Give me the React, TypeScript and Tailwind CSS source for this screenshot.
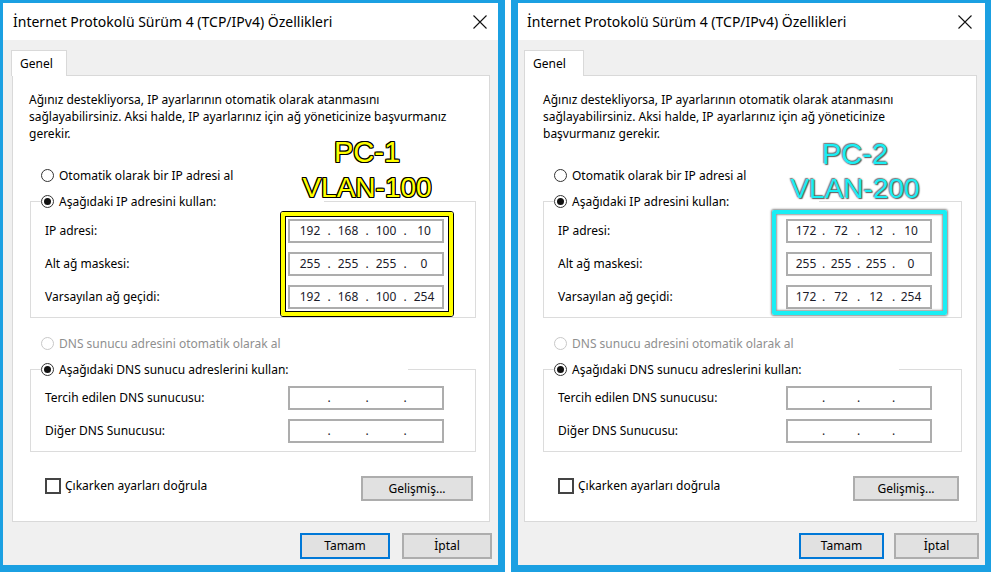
import React from 'react';

type Cfg = {
  outer: string;
  titlePl: string;
  closeMr: string;
  tabW: string;
  panelMx: string;
  para: string[];
  paraPl: string;
  radioPl: string;
  fsMx: string;
  legendIp: string;
  legendDns: string;
  rowPr: string;
  inputW: string;
  segPl: string;
  segW: string;
  dotW: string;
  checkPl: string;
  advBtn: string;
  footBtn: string;
  footGap: string;
  ips: string[][];
  label: [string, string];
  labelPos: string;
  labelColor: string;
  labelGap: string;
  box: string;
  boxInner: string;
};

const font = 'font-["Noto_Sans","Open_Sans",sans-serif]';

function Radio({ checked, disabled }: { checked?: boolean; disabled?: boolean }) {
  return (
    <span
      className={
        'flex h-[13px] w-[13px] shrink-0 items-center justify-center rounded-full border bg-white ' +
        (disabled ? 'border-[#c8c8c8]' : 'border-[#333333]')
      }
    >
      {checked && <span className="h-[7px] w-[7px] rounded-full bg-[#111111]" />}
    </span>
  );
}

function IpBox({ cfg, value }: { cfg: Cfg; value?: string[] }) {
  const parts = value ?? ['', '', '', ''];
  return (
    <div className={`flex h-[24px] items-center border-2 border-[#adadad] bg-white text-[12px] text-[#1b1b2a] ${cfg.inputW} ${cfg.segPl}`}>
      {parts.map((p, i) => (
        <React.Fragment key={i}>
          <span className={`${cfg.segW} text-center`}>{p}</span>
          {i < 3 && <span className={`${cfg.dotW} text-center`}>.</span>}
        </React.Fragment>
      ))}
    </div>
  );
}

function Row({ cfg, label, value }: { cfg: Cfg; label: string; value?: string[] }) {
  return (
    <div className={`flex items-center justify-between pl-[14px] ${cfg.rowPr}`}>
      <span>{label}</span>
      <IpBox cfg={cfg} value={value} />
    </div>
  );
}

function Btn({ children, cls }: { children: React.ReactNode; cls: string }) {
  return (
    <div className={`flex items-center justify-center bg-[#e1e1e1] text-[12px] text-black ${cls}`}>
      {children}
    </div>
  );
}

function Dialog({ cfg }: { cfg: Cfg }) {
  return (
    <div className={`relative flex h-[572px] shrink-0 flex-col border-[#1ba0e2] bg-[#f0f0f0] ${cfg.outer} ${font}`}>
      {/* title bar */}
      <div className={`flex h-[37px] items-center justify-between bg-white ${cfg.titlePl}`}>
        <span className="text-[14px] text-black">İnternet Protokolü Sürüm 4 (TCP/IPv4) Özellikleri</span>
        <svg width="14" height="14" viewBox="0 0 14 14" className={cfg.closeMr}>
          <path d="M0.5 0.5 L13.5 13.5 M13.5 0.5 L0.5 13.5" stroke="#111" strokeWidth="1.1" />
        </svg>
      </div>

      <div className={`flex flex-1 flex-col pt-[10px] ${cfg.panelMx}`}>
        {/* tab */}
        <div className={`relative z-10 -mb-px flex h-[26px] items-center border border-b-0 border-[#d9d9d9] bg-white pl-[8px] text-[12px] ${cfg.tabW}`}>
          Genel
        </div>

        {/* tab page */}
        <div className="flex h-[447px] flex-col border border-[#d9d9d9] bg-white text-[12px] text-black">
          <p className={`pt-[15px] leading-[17px] whitespace-nowrap ${cfg.paraPl}`}>
            {cfg.para.map((l, i) => (
              <span key={i} className="block">
                {l}
              </span>
            ))}
          </p>

          <div className={`mt-[25px] flex h-[17px] items-center gap-[5px] ${cfg.radioPl}`}>
            <Radio />
            <span>Otomatik olarak bir IP adresi al</span>
          </div>

          <fieldset className={`mt-[9px] border border-[#dcdcdc] pb-[8px] ${cfg.fsMx}`}>
            <legend className={`ml-[10px] flex h-[17px] items-center gap-[5px] ${cfg.legendIp}`}>
              <Radio checked />
              <span>Aşağıdaki IP adresini kullan:</span>
            </legend>
            <div className="flex flex-col gap-[9px] pt-[9px]">
              <Row cfg={cfg} label="IP adresi:" value={cfg.ips[0]} />
              <Row cfg={cfg} label="Alt ağ maskesi:" value={cfg.ips[1]} />
              <Row cfg={cfg} label="Varsayılan ağ geçidi:" value={cfg.ips[2]} />
            </div>
          </fieldset>

          <div className={`mt-[17px] flex h-[17px] items-center gap-[5px] text-[#8f8f8f] ${cfg.radioPl}`}>
            <Radio disabled />
            <span>DNS sunucu adresini otomatik olarak al</span>
          </div>

          <fieldset className={`mt-[9px] border border-[#dcdcdc] pb-[8px] ${cfg.fsMx}`}>
            <legend className={`ml-[10px] flex h-[17px] items-center gap-[5px] ${cfg.legendDns}`}>
              <Radio checked />
              <span>Aşağıdaki DNS sunucu adreslerini kullan:</span>
            </legend>
            <div className="flex flex-col gap-[9px] pt-[8px]">
              <Row cfg={cfg} label="Tercih edilen DNS sunucusu:" />
              <Row cfg={cfg} label="Diğer DNS Sunucusu:" />
            </div>
          </fieldset>

          <div className="mt-[24px] flex items-start justify-between">
            <div className={`mt-[2px] flex h-[16px] items-center gap-[4px] ${cfg.checkPl}`}>
              <span className="h-[16px] w-[16px] border-2 border-[#444] bg-white" />
              <span>Çıkarken ayarları doğrula</span>
            </div>
            <Btn cls={`h-[25px] border-2 border-[#adadad] ${cfg.advBtn}`}>Gelişmiş...</Btn>
          </div>
        </div>

        {/* footer */}
        <div className={`flex flex-1 items-start justify-end pt-[11px] ${cfg.footGap}`}>
          <Btn cls={`h-[26px] border-2 border-[#0078d7] ${cfg.footBtn}`}>Tamam</Btn>
          <Btn cls={`h-[26px] border-2 border-[#adadad] ${cfg.footBtn}`}>İptal</Btn>
        </div>
      </div>

      {/* annotation */}
      <div className={`pointer-events-none absolute ${cfg.box}`}>
        <div className={`h-full w-full ${cfg.boxInner}`} />
      </div>
      <div
        className={`pointer-events-none absolute flex w-[200px] flex-col items-center font-['Liberation_Sans',Arial,sans-serif] ${cfg.labelPos} ${cfg.labelColor}`}
      >
        <span className="text-[29px] leading-[29px]">{cfg.label[0]}</span>
        <span className={`text-[28px] leading-[28px] ${cfg.labelGap}`}>{cfg.label[1]}</span>
      </div>
    </div>
  );
}

const left: Cfg = {
  outer: 'w-[505px] border-t-[3px] border-l-[3px] border-r-[7px] border-b-[7px]',
  titlePl: 'pl-[10px]',
  closeMr: 'mr-[11px]',
  tabW: 'w-[56px] -ml-px',
  panelMx: 'ml-[9px] mr-[8px]',
  para: [
    'Ağınız destekliyorsa, IP ayarlarının otomatik olarak atanmasını',
    'sağlayabilirsiniz. Aksi halde, IP ayarlarınız için ağ yöneticinize başvurmanız',
    'gerekir.',
  ],
  paraPl: 'pl-[16px]',
  radioPl: 'pl-[28px]',
  fsMx: 'ml-[17px] mr-[13px]',
  legendIp: 'w-[283px]',
  legendDns: 'w-[367px]',
  rowPr: 'pr-[31px]',
  inputW: 'w-[156px]',
  segPl: 'pl-[5px]',
  segW: 'w-[30px]',
  dotW: 'w-[8px]',
  checkPl: 'pl-[32px]',
  advBtn: 'w-[112px] mr-[16px]',
  footBtn: 'w-[90px]',
  footGap: 'gap-[12px] -mr-[2px]',
  ips: [
    ['192', '168', '100', '10'],
    ['255', '255', '255', '0'],
    ['192', '168', '100', '254'],
  ],
  label: ['PC-1', 'VLAN-100'],
  labelPos: 'left-[264px] top-[135px]',
  labelColor:
    'text-[#ffff00] [text-shadow:1px_0_0_#000,-1px_0_0_#000,0_1px_0_#000,0_-1px_0_#000,1px_1px_0_#000,-1px_-1px_0_#000,1px_-1px_0_#000,-1px_1px_0_#000]',
  labelGap: 'mt-[7px]',
  box: 'left-[277px] top-[208px] w-[174px] h-[106px] rounded-[3px] border border-black',
  boxInner: 'rounded-[2px] border-4 border-[#ffff00] outline outline-1 -outline-offset-5 outline-black',
};

const right: Cfg = {
  outer: 'w-[480px] border-t-[3px] border-l-[7px] border-r-[6px] border-b-[7px]',
  titlePl: 'pl-[9px]',
  closeMr: 'mr-[13px]',
  tabW: 'w-[60px]',
  panelMx: 'ml-[6px] mr-[8px]',
  para: [
    'Ağınız destekliyorsa, IP ayarlarının otomatik olarak atanmasını',
    'sağlayabilirsiniz. Aksi halde, IP ayarlarınız için ağ yöneticinize',
    'başvurmanız gerekir.',
  ],
  paraPl: 'pl-[18px]',
  radioPl: 'pl-[29px]',
  fsMx: 'ml-[18px] mr-[14px]',
  legendIp: 'w-[265px]',
  legendDns: 'w-[345px]',
  rowPr: 'pr-[29px]',
  inputW: 'w-[146px]',
  segPl: 'pl-[4px]',
  segW: 'w-[28px]',
  dotW: 'w-[7px]',
  checkPl: 'pl-[33px]',
  advBtn: 'w-[106px] mr-[17px]',
  footBtn: 'w-[85px]',
  footGap: 'gap-[10px] -mr-[2px]',
  ips: [
    ['172', '72', '12', '10'],
    ['255', '255', '255', '0'],
    ['172', '72', '12', '254'],
  ],
  label: ['PC-2', 'VLAN-200'],
  labelPos: 'left-[237px] top-[137px]',
  labelColor:
    'text-[#1aeef4] [text-shadow:0_0_2px_#555,1px_1px_1px_#666,-1px_-1px_1px_#888]',
  labelGap: 'mt-[6px]',
  box: 'left-[254px] top-[207px] w-[175px] h-[105px] rounded-[2px] border-4 border-[#1aeef4] shadow-[0_0_2px_1px_rgba(0,0,0,0.45),inset_0_0_2px_1px_rgba(0,0,0,0.4)]',
  boxInner: '',
};

export default function App() {
  return (
    <div className="flex h-[572px] w-[991px] gap-[6px] overflow-hidden bg-white">
      <Dialog cfg={left} />
      <Dialog cfg={right} />
    </div>
  );
}
